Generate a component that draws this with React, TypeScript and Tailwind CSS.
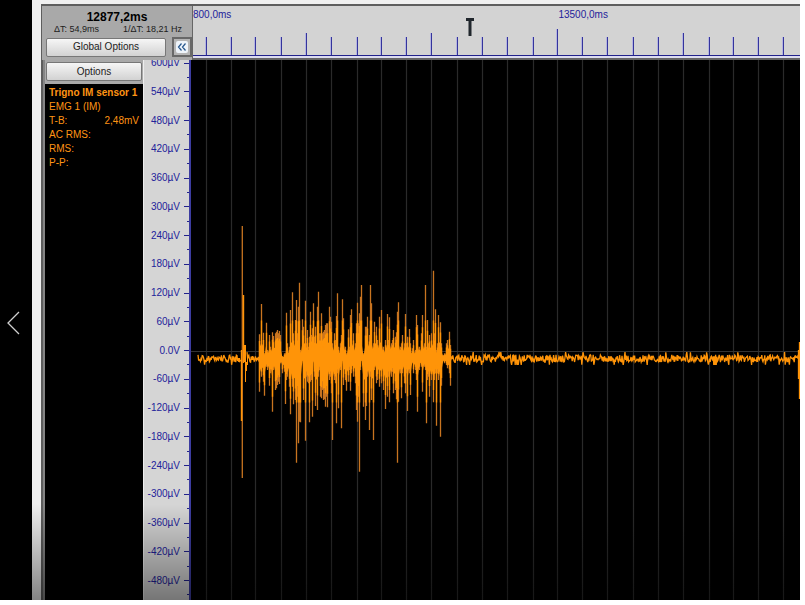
import React from "react";

const PLOT_X = 191;
const PLOT_Y = 60;
const PLOT_W = 609;
const PLOT_H = 540;

// Ruler ticks: distance from the ruler's left edge and height.
const TICKS: [number, number][] = [
  [13, 18], [38, 18], [62, 18], [88, 18], [113, 22], [138, 18], [164, 18], [188, 18],
  [213, 18], [238, 22], [264, 18], [289, 18], [314, 18], [340, 18], [364, 26], [389, 18],
  [414, 18], [440, 18], [465, 18], [490, 22], [516, 18], [540, 18], [565, 18], [590, 18],
];

const LEVELS = Array.from({ length: 38 }, (_, i) => 600 - i * 30);

// Muscle burst samples: x, upper peak, lower peak, in thirds of a pixel.
const BURST_A: [number, number, number][] = [
  [222, 373, 545], [228, 282, 500], [233, 368, 515], [238, 430, 557], [242, 338, 470],
  [247, 420, 480], [252, 375, 527], [256, 410, 490], [260, 367, 605], [265, 378, 480],
  [269, 370, 540], [272, 365, 535], [275, 360, 525], [279, 370, 515], [283, 363, 522],
  [286, 375, 460], [291, 450, 490], [296, 430, 485], [300, 430, 582], [303, 308, 510],
  [307, 400, 500], [312, 410, 530], [316, 300, 613], [321, 247, 530], [325, 370, 583],
  [329, 330, 570], [332, 365, 758], [334, 270, 600], [337, 370, 560], [340, 290, 700],
  [343, 218, 635], [346, 420, 637], [350, 328, 440], [355, 350, 570], [359, 272, 692],
  [362, 400, 500], [365, 360, 515], [369, 410, 520], [372, 380, 637], [374, 305, 515],
  [379, 375, 510], [382, 355, 620], [385, 280, 455], [388, 380, 500], [391, 350, 588],
  [396, 290, 600], [398, 245, 500], [401, 370, 480], [404, 370, 540], [409, 310, 565],
  [413, 380, 550], [416, 360, 568],
];

const BURST_B: [number, number, number][] = [
  [0, 370, 560], [3, 310, 565], [7, 370, 540], [10, 365, 570], [16, 345, 590],
  [19, 340, 560], [22, 340, 592], [26, 290, 510], [29, 320, 500], [32, 335, 550],
  [36, 400, 690], [41, 370, 510], [44, 390, 520], [47, 318, 640], [50, 250, 490],
  [55, 410, 595], [59, 400, 480], [62, 375, 655], [66, 268, 430], [70, 325, 525],
  [74, 410, 510], [78, 430, 542], [84, 358, 515], [87, 410, 480], [90, 315, 542],
  [94, 298, 490], [100, 370, 500], [104, 400, 520], [107, 340, 600], [112, 278, 635],
  [115, 340, 560], [118, 310, 785], [121, 260, 480], [124, 225, 450], [130, 430, 590],
  [134, 350, 630], [138, 350, 588], [142, 320, 500], [147, 375, 660], [150, 225, 500],
  [153, 280, 570], [158, 400, 690], [162, 335, 480], [167, 350, 520], [172, 390, 510],
  [177, 320, 530], [182, 300, 520], [184, 312, 500], [190, 410, 540], [195, 390, 597],
  [200, 312, 560], [204, 390, 500], [208, 322, 577], [212, 400, 500], [215, 390, 485],
  [220, 360, 550], [224, 380, 540], [227, 367, 568], [232, 305, 758], [235, 277, 575],
  [239, 410, 490], [242, 400, 565], [246, 375, 490], [251, 400, 520], [255, 312, 550],
  [258, 400, 490], [261, 380, 603], [266, 357, 490], [269, 400, 555], [275, 415, 460],
  [280, 390, 490], [284, 420, 480], [288, 315, 510], [292, 345, 605], [298, 410, 480],
  [303, 370, 470], [307, 315, 545], [311, 400, 470], [314, 225, 480], [318, 410, 640],
  [322, 330, 510], [325, 400, 500], [328, 375, 560], [333, 370, 510], [338, 182, 577],
  [341, 370, 510], [344, 298, 490], [347, 420, 647], [351, 400, 490], [355, 315, 510],
  [360, 337, 680], [363, 400, 527], [368, 435, 452], [373, 430, 460], [378, 400, 465],
  [382, 390, 475], [386, 365, 490], [389, 405, 527],
];

const SAMPLES = [
  ...BURST_A.map(([x, a, b]) => [185 + x / 3, 210 + a / 3, 210 + b / 3]),
  ...BURST_B.map(([x, a, b]) => [320 + x / 3, 210 + a / 3, 210 + b / 3]),
].map(([x, a, b]) => [Math.round(x - PLOT_X) + 0.5, a - PLOT_Y, b - PLOT_Y]);

const BASE = 298.5;

function peaks(): string {
  return SAMPLES.map(([x, a, b]) => `M${x} ${a.toFixed(1)}V${b.toFixed(1)}`).join("");
}

function core(): string {
  return SAMPLES.map(([x, a, b]) => {
    const top = BASE - Math.min(Math.max(BASE - a, 3) * 0.72, 38);
    const bottom = BASE + Math.min(Math.max(b - BASE, 3) * 0.72, 44);
    return `M${x} ${top.toFixed(1)}V${bottom.toFixed(1)}`;
  }).join("");
}

function band(): string {
  const upper = SAMPLES.map(([x, a]) => `${x},${(BASE - Math.min(Math.max(BASE - a, 2) * 0.45, 16)).toFixed(1)}`);
  const lower = SAMPLES.map(([x, , b]) => `${x},${(BASE + Math.min(Math.max(b - BASE, 2) * 0.45, 21)).toFixed(1)}`).reverse();
  return [...upper, ...lower].join(" ");
}

function rest(from: number, to: number, seed: number): string {
  let s = seed;
  const points: string[] = [];
  for (let x = from; x <= to; x += 0.6) {
    s = (s * 16807) % 2147483647;
    const r = s / 2147483647 - 0.5;
    const swing = Math.abs(r) > 0.47 ? 13 : 8;
    points.push(`${x.toFixed(1)},${(BASE + r * swing).toFixed(1)}`);
  }
  return points.join(" ");
}

function Waveform() {
  return (
    <svg
      className="block h-full w-full"
      viewBox={`0 0 ${PLOT_W} ${PLOT_H}`}
      preserveAspectRatio="none"
      role="img"
      aria-label="EMG 1 (IM)"
    >
      {TICKS.map(([x]) => (
        <path key={x} d={`M${x + 2.5} 0V${PLOT_H}`} stroke="#2a2a2a" strokeWidth="1.2" />
      ))}
      <path d={`M0 291.5H${PLOT_W}`} stroke="#333333" />
      <g fill="none" stroke="#ff9408">
        <polyline points={rest(7, 50, 4711)} strokeWidth="1.3" />
        <polyline points={rest(56, 68, 977)} strokeWidth="1.3" />
        <polyline points={rest(257, 607, 31337)} strokeWidth="1.3" />
        <path d="M51.3 166V418" stroke="#c87420" strokeWidth="1.3" />
        <path d="M50.5 290V361M52.5 235V303M53.5 285V302" strokeWidth="1.4" />
        <path d="M54.5 285V322M55.5 302V311M56.5 297V305" />
        <path d={peaks()} stroke="#c87420" strokeWidth="1.3" />
        <path d={core()} strokeWidth="1.4" />
        <polygon points={band()} fill="#ff9408" stroke="none" />
        <path d="M607.5 290V319M608.5 282V339" strokeWidth="1.3" />
      </g>
    </svg>
  );
}

function ReadoutHeader() {
  return (
    <div className="flex w-[150px] shrink-0 flex-col bg-[#a9a9a9] text-[#1c1c1c]">
      <div className="pt-1 text-center text-xs leading-[14px] font-bold text-black">12877,2ms</div>
      <div className="flex justify-between pr-[10px] pl-3 text-[9px] leading-[11px]">
        <span>ΔT: 54,9ms</span>
        <span>1/ΔT: 18,21 Hz</span>
      </div>
      <div className="mt-[2px] flex items-center justify-between pl-1">
        <button className="h-[19px] w-[120px] rounded-[2px] border border-[#777] bg-linear-to-b from-[#f6f6f6] to-[#d2d2d2] text-[10px] leading-none">
          Global Options
        </button>
        <button
          aria-label="Collapse"
          className="flex h-5 w-5 items-center justify-center border-2 border-[#686868] bg-[#b5b5b5]"
        >
          <svg width="12" height="12" viewBox="0 0 12 12" fill="none">
            <rect width="12" height="12" rx="2" fill="#eef4fa" />
            <path d="M5.5 2.5L2.5 6L5.5 9.5M9.5 2.5L6.5 6L9.5 9.5" stroke="#24558c" strokeWidth="1.2" />
          </svg>
        </button>
      </div>
    </div>
  );
}

function Ruler() {
  return (
    <div className="relative min-w-0 flex-1 overflow-hidden border-l border-[#666] bg-[#d3d3d3] text-[10px] leading-3 text-[#22229a]">
      <svg className="block h-full w-full" viewBox="0 0 607 54" preserveAspectRatio="none">
        {TICKS.map(([x, h]) => (
          <React.Fragment key={x}>
            <path d={`M${x - 0.5} ${49 - h}V49`} stroke="#b4b4e0" />
            <path d={`M${x + 0.5} ${49 - h}V49`} stroke="#34349c" />
          </React.Fragment>
        ))}
        <path d="M0 49.5H608" stroke="#22228c" />
        <path d="M0 51H608" stroke="#dcdcf0" strokeWidth="2" />
        <path d="M0 53H608" stroke="#666666" strokeWidth="2" />
        <path d="M273 13.5H281M277 13V30" stroke="#20262c" strokeWidth="3" />
      </svg>
      <span className="absolute top-[3px] left-0">800,0ms</span>
      <span className="absolute top-[3px] left-[60.2%]">13500,0ms</span>
    </div>
  );
}

function ChannelPanel() {
  return (
    <section className="flex w-[98px] shrink-0 flex-col bg-black text-[10px] text-[#ff9414]">
      <div className="bg-[#a9a9a9] px-px pt-[2px] pb-[3px]">
        <button className="block h-[19px] w-full rounded-[2px] border border-[#777] bg-linear-to-b from-[#f6f6f6] to-[#d2d2d2] text-[10px] leading-none text-[#1c1c1c]">
          Options
        </button>
      </div>
      <div className="px-1 pt-[2px] leading-[14px] whitespace-nowrap">
        <h2 className="font-bold">Trigno IM sensor 1</h2>
        <p>EMG 1 (IM)</p>
        <p className="flex justify-between">
          <span>T-B:</span>
          <span>2,48mV</span>
        </p>
        <p>AC RMS:</p>
        <p>RMS:</p>
        <p>P-P:</p>
      </div>
    </section>
  );
}

function VoltageAxis() {
  return (
    <div className="flex w-12 shrink-0 flex-col justify-between overflow-hidden border-r-2 border-l border-r-[#3c3ca0] border-l-[#eee] bg-[#d5d5d5] pt-[3px] pb-[5px] text-[10px] leading-3 text-[#22229a]">
      {LEVELS.map((level) =>
        level % 60 === 0 ? (
          <div key={level} className="flex h-0 items-center justify-end gap-1">
            <span>{level === 0 ? "0.0V" : `${level}µV`}</span>
            <span className="h-px w-[5px] bg-[#22228c]" />
          </div>
        ) : (
          <div key={level} className="flex h-0 items-center justify-end">
            <span className="h-px w-[2px] bg-[#22228c]" />
          </div>
        ),
      )}
    </div>
  );
}

export default function App() {
  return (
    <div className="h-screen bg-white pr-[5px] pb-[5px] font-['Liberation_Sans',Arial,sans-serif]">
      <main className="relative flex h-full overflow-hidden bg-black">
        <button aria-label="Previous" className="flex w-8 shrink-0 items-center bg-black pt-[46px] pl-[7px]">
          <svg width="13" height="24" viewBox="0 0 13 24" fill="none">
            <path d="M12 1L1 12L12 23" stroke="#d0d0d0" strokeWidth="1.3" />
          </svg>
        </button>
        <div className="flex min-w-0 flex-1 flex-col border-t-4 border-l-[9px] border-[#f0f0f0]">
          <div className="flex min-h-0 flex-1 flex-col border-t-2 border-l border-[#5e5e5e]">
            <header className="flex h-[54px] shrink-0">
              <ReadoutHeader />
              <Ruler />
            </header>
            <div className="flex min-h-0 flex-1">
              <div className="w-[3px] shrink-0 border-l border-[#5e5e5e] bg-[#858585]" />
              <ChannelPanel />
              <VoltageAxis />
              <div className="min-w-0 flex-1 overflow-hidden bg-black">
                <Waveform />
              </div>
            </div>
          </div>
        </div>
        <div className="pointer-events-none absolute inset-x-0 bottom-0 h-24 bg-linear-to-b from-transparent to-black/45" />
      </main>
    </div>
  );
}
